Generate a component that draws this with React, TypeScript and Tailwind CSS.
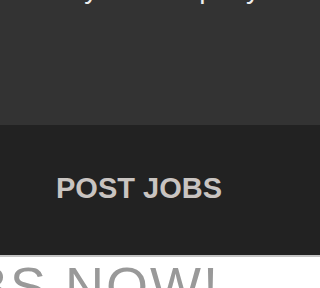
import React from "react";

export default function App() {
  return (
    <div className="w-full h-[288px] overflow-hidden bg-white" style={{ fontFamily: '"Liberation Sans", Arial, sans-serif' }}>
      <div className="h-[125px] bg-[#333333] overflow-hidden">
        <div className="w-[288px] mt-[-25px] flex justify-end pr-[28px] whitespace-nowrap text-[28px] leading-none text-[#eeeeee]">
          Hire the best talent for your company
        </div>
      </div>
      <div className="h-[130px] bg-[#222222] pt-[49px] pl-[56px]">
        <div className="text-[29px] leading-none font-bold text-[#c9c4c1] whitespace-nowrap">POST JOBS</div>
      </div>
      <div className="h-[2px] bg-[#c4c4c4]" />
      <div className="h-[31px] overflow-hidden bg-white">
        <div className="w-[288px] flex justify-end pr-[68px] pt-[2px] whitespace-nowrap text-[54px] leading-none tracking-[2px] text-[#999999]">
          FIND JOBS NOW!
        </div>
      </div>
    </div>
  );
}
